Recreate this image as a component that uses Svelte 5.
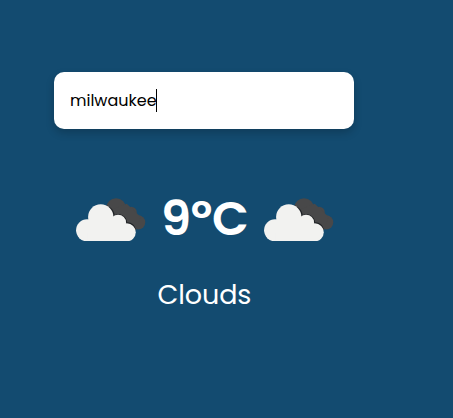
<script>
  let city = $state('milwaukee');
  const temperature = 9;
</script>

{#snippet cloud()}
  <svg class="cloud" viewBox="18 23 208 131" aria-hidden="true">
    <g fill="#484849">
      <circle cx="138" cy="53" r="29.5" />
      <circle cx="183" cy="66" r="17" />
      <circle cx="204" cy="96" r="21.5" />
      <path d="M120 60L170 40L212 80L196 118L160 105Z" />
    </g>
    <g fill="#202326">
      <path d="M109 45A39 39 0 0 1 134 74A26 26 0 0 1 171 96A29 29 0 0 1 198 118L185 130L90 110Z" />
    </g>
    <g fill="#f2f2f0">
      <circle cx="51" cy="120" r="33" />
      <circle cx="92" cy="80" r="38" />
      <circle cx="144" cy="97" r="24" />
      <circle cx="170" cy="126" r="27" />
      <path d="M51 90H155L170 126V153H51Z" />
    </g>
  </svg>
{/snippet}

<main>
  <div class="search"><span class="city">{city}</span><span class="caret"></span></div>
  <div class="weather">
    {@render cloud()}
    <h1>{temperature}ºC</h1>
    {@render cloud()}
  </div>
  <p>Clouds</p>
</main>

<style>
  :global(body) {
    margin: 0;
    background: #134b70;
  }
  main {
    box-sizing: border-box;
    width: 453px;
    height: 418px;
    padding: 72px 99px 0 54px;
    overflow: hidden;
    background: #134b70;
    font-family: Poppins, Inter, sans-serif;
    color: #fff;
  }
  .search {
    box-sizing: border-box;
    display: flex;
    align-items: center;
    width: 300px;
    height: 57px;
    padding-left: 16px;
    border-radius: 10px;
    background: #fff;
    box-shadow: 0 4px 8px rgba(0, 0, 0, 0.2);
    color: #000;
    font-size: 16px;
  }
  .city {
    width: 86px;
    white-space: nowrap;
  }
  .caret {
    width: 1px;
    height: 23px;
    background: #000;
  }
  .weather {
    display: flex;
    align-items: flex-start;
    height: 44px;
    margin: 68.6px 0 0 22px;
  }
  .cloud {
    display: block;
    flex: none;
    width: 69.5px;
    height: 43.7px;
  }
  h1 {
    flex: none;
    width: 118.5px;
    height: 44px;
    margin: 0;
    font-size: 48px;
    font-weight: 600;
    line-height: 42px;
    text-align: center;
    letter-spacing: -0.3px;
  }
  p {
    width: 300px;
    height: 40px;
    margin: 33.4px 0 0;
    font-size: 27px;
    line-height: 40px;
    text-align: center;
    letter-spacing: -0.1px;
    text-indent: 0.8px;
  }
</style>
